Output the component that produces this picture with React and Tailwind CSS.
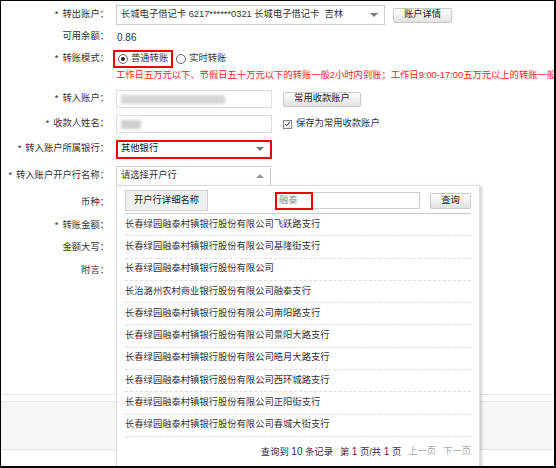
import React from "react";

const banks = [
  "长春绿园融泰村镇银行股份有限公司飞跃路支行",
  "长春绿园融泰村镇银行股份有限公司基隆街支行",
  "长春绿园融泰村镇银行股份有限公司",
  "长治潞州农村商业银行股份有限公司融泰支行",
  "长春绿园融泰村镇银行股份有限公司南阳路支行",
  "长春绿园融泰村镇银行股份有限公司景阳大路支行",
  "长春绿园融泰村镇银行股份有限公司皓月大路支行",
  "长春绿园融泰村镇银行股份有限公司西环城路支行",
  "长春绿园融泰村镇银行股份有限公司正阳街支行",
  "长春绿园融泰村镇银行股份有限公司春城大街支行",
];

const Label = ({ children, star }) => (
  <div className="w-[110px] shrink-0 text-right pr-[2px] text-[#333]">
    {star && <span className="mr-[4px]">*</span>}
    {children}：
  </div>
);

const GrayButton = ({ children, className = "" }) => (
  <button
    className={`flex items-center justify-center rounded-[2px] border border-[#c9c9c9] bg-linear-to-b from-white to-[#e2e2e2] text-[#222] ${className}`}
  >
    {children}
  </button>
);

const ArrowDown = () => (
  <span className="w-0 h-0 border-x-[4px] border-x-transparent border-t-[4px] border-t-[#777]" />
);

const ArrowUp = () => (
  <span className="w-0 h-0 border-x-[4px] border-x-transparent border-b-[4px] border-b-[#999]" />
);

export default function App() {
  return (
    <div className="relative w-[556px] h-[468px] overflow-hidden bg-white border-l border-t border-r-2 border-b-2 border-black font-['Liberation_Sans','Noto_Sans_CJK_SC',sans-serif] text-[9.3px] text-[#333]">
      <div className="flex flex-col">
        {/* 转出账户 */}
        <div className="flex items-center h-[20px] mt-[4px] gap-[5px]">
          <Label star>转出账户</Label>
          <div className="flex items-center justify-between w-[269px] h-[20px] border border-[#ccc] pl-[4px] pr-[6px]">
            <span className="whitespace-nowrap">长城电子借记卡 6217******0321 长城电子借记卡&nbsp;&nbsp;吉林</span>
            <ArrowDown />
          </div>
          <GrayButton className="ml-[3px] w-[59px] h-[15px]">账户详情</GrayButton>
        </div>

        {/* 可用余额 */}
        <div className="flex items-center h-[24px] gap-[5px]">
          <Label>可用余额</Label>
          <span className="ml-[1px] text-[10px]">0.86</span>
        </div>

        {/* 转账模式 */}
        <div className="flex items-center h-[20px] gap-[5px]">
          <Label star>转账模式</Label>
          <div className="flex items-center">
            <div className="flex items-center gap-[3px] -ml-[3px] h-[18px] px-[3px] border-2 border-[#e00]">
              <span className="flex items-center justify-center w-[10px] h-[10px] rounded-full border border-[#666] bg-white">
                <span className="w-[4px] h-[4px] rounded-full bg-[#222]" />
              </span>
              <span>普通转账</span>
            </div>
            <div className="flex items-center gap-[3px] ml-[3px]">
              <span className="w-[10px] h-[10px] rounded-full border border-[#666] bg-white" />
              <span>实时转账</span>
            </div>
          </div>
        </div>
        <div className="flex items-center h-[14px] gap-[5px]">
          <div className="w-[110px] shrink-0" />
          <span className="whitespace-nowrap text-[#f22]">
            工作日五万元以下、节假日五十万元以下的转账一般2小时内到账；工作日9:00-17:00五万元以上的转账一般2小时内到账
          </span>
        </div>

        {/* 转入账户 */}
        <div className="flex items-center h-[18px] mt-[7px] gap-[5px]">
          <Label star>转入账户</Label>
          <div className="flex items-center w-[156px] h-[18px] border border-[#ddd] pl-[4px]">
            <div className="w-[104px] h-[9px] bg-[#d6d6d6] blur-[1.5px]" />
          </div>
          <GrayButton className="ml-[6px] w-[78px] h-[15px]">常用收款账户</GrayButton>
        </div>

        {/* 收款人姓名 */}
        <div className="flex items-center h-[18px] mt-[7px] gap-[5px]">
          <Label star>收款人姓名</Label>
          <div className="flex items-center w-[156px] h-[18px] border border-[#ddd] pl-[4px]">
            <div className="w-[20px] h-[9px] bg-[#cfcfcf] blur-[1.5px]" />
          </div>
          <div className="flex items-center gap-[4px] ml-[6px]">
            <span className="flex items-center justify-center w-[9px] h-[9px] border border-[#888] bg-white">
              <svg viewBox="0 0 10 10" className="w-[8px] h-[8px]">
                <path d="M1.5 5 L4 7.5 L8.5 1.5" fill="none" stroke="#222" strokeWidth="1.4" />
              </svg>
            </span>
            <span>保存为常用收款账户</span>
          </div>
        </div>

        {/* 所属银行 */}
        <div className="flex items-center h-[18px] mt-[7px] gap-[5px]">
          <Label star>转入账户所属银行</Label>
          <div className="flex items-center justify-between w-[156px] h-[19px] border-2 border-[#e00] pl-[3px] pr-[6px]">
            <span className="text-[#111]">其他银行</span>
            <ArrowDown />
          </div>
        </div>

        {/* 开户行名称 */}
        <div className="flex items-center h-[20px] mt-[8px] gap-[5px]">
          <Label star>转入账户开户行名称</Label>
          <div className="flex items-center justify-between w-[155px] h-[20px] border border-[#ccc] pl-[4px] pr-[6px]">
            <span>请选择开户行</span>
            <ArrowUp />
          </div>
        </div>

        <div className="flex items-center h-[18px] mt-[8px] gap-[5px]">
          <Label>币种</Label>
        </div>
        <div className="flex items-center h-[18px] mt-[5px] gap-[5px]">
          <Label star>转账金额</Label>
        </div>
        <div className="flex items-center h-[18px] mt-[4px] gap-[5px]">
          <Label>金额大写</Label>
        </div>
        <div className="flex items-center h-[18px] mt-[5px] gap-[5px]">
          <Label>附言</Label>
        </div>

        {/* bottom bands */}
        <div className="mt-[114px] border-t border-[#e6e6e6] h-[7px]" />
        <div className="h-[49px] bg-[#f6f6f6] border-y border-[#e6e6e6]" />
      </div>

      {/* 开户行下拉面板 */}
      <div className="absolute left-[115px] top-[184px] w-[364px] h-[300px] bg-white border border-[#ddd] shadow-[2px_1px_3px_rgba(0,0,0,0.18)] px-[8px] pt-[4px]">
        <div className="flex items-center justify-between h-[24px] border-b border-[#ccc] pb-[2px]">
          <GrayButton className="w-[83px] h-[21px] bg-none bg-[#f0f0f0] border-[#d0d0d0] rounded-none">
            开户行详细名称
          </GrayButton>
          <div className="flex items-center gap-[10px]">
            <div className="relative w-[145px] h-[17px] border border-[#ccc] flex items-center pl-[3px]">
              <span className="text-[#888]">融泰</span>
              <div className="absolute -left-[1px] -top-[1px] w-[38px] h-[18px] border-2 border-[#e00]" />
            </div>
            <GrayButton className="w-[41px] h-[16px]">查询</GrayButton>
          </div>
        </div>
        <div className="flex flex-col">
          {banks.map((b) => (
            <div
              key={b}
              className="h-[22.3px] flex items-center border-b border-dashed border-[#ddd] text-[#333]"
            >
              {b}
            </div>
          ))}
        </div>
        <div className="flex justify-end items-center h-[30px] gap-[7px] whitespace-nowrap">
          <span>
            查询到 <span className="text-[10px]">10</span> 条记录
          </span>
          <span>
            第 <span className="text-[10px]">1</span> 页/共 <span className="text-[10px]">1</span> 页
          </span>
          <span className="text-[#aaa]">上一页</span>
          <span className="text-[#aaa]">下一页</span>
        </div>
      </div>
    </div>
  );
}
